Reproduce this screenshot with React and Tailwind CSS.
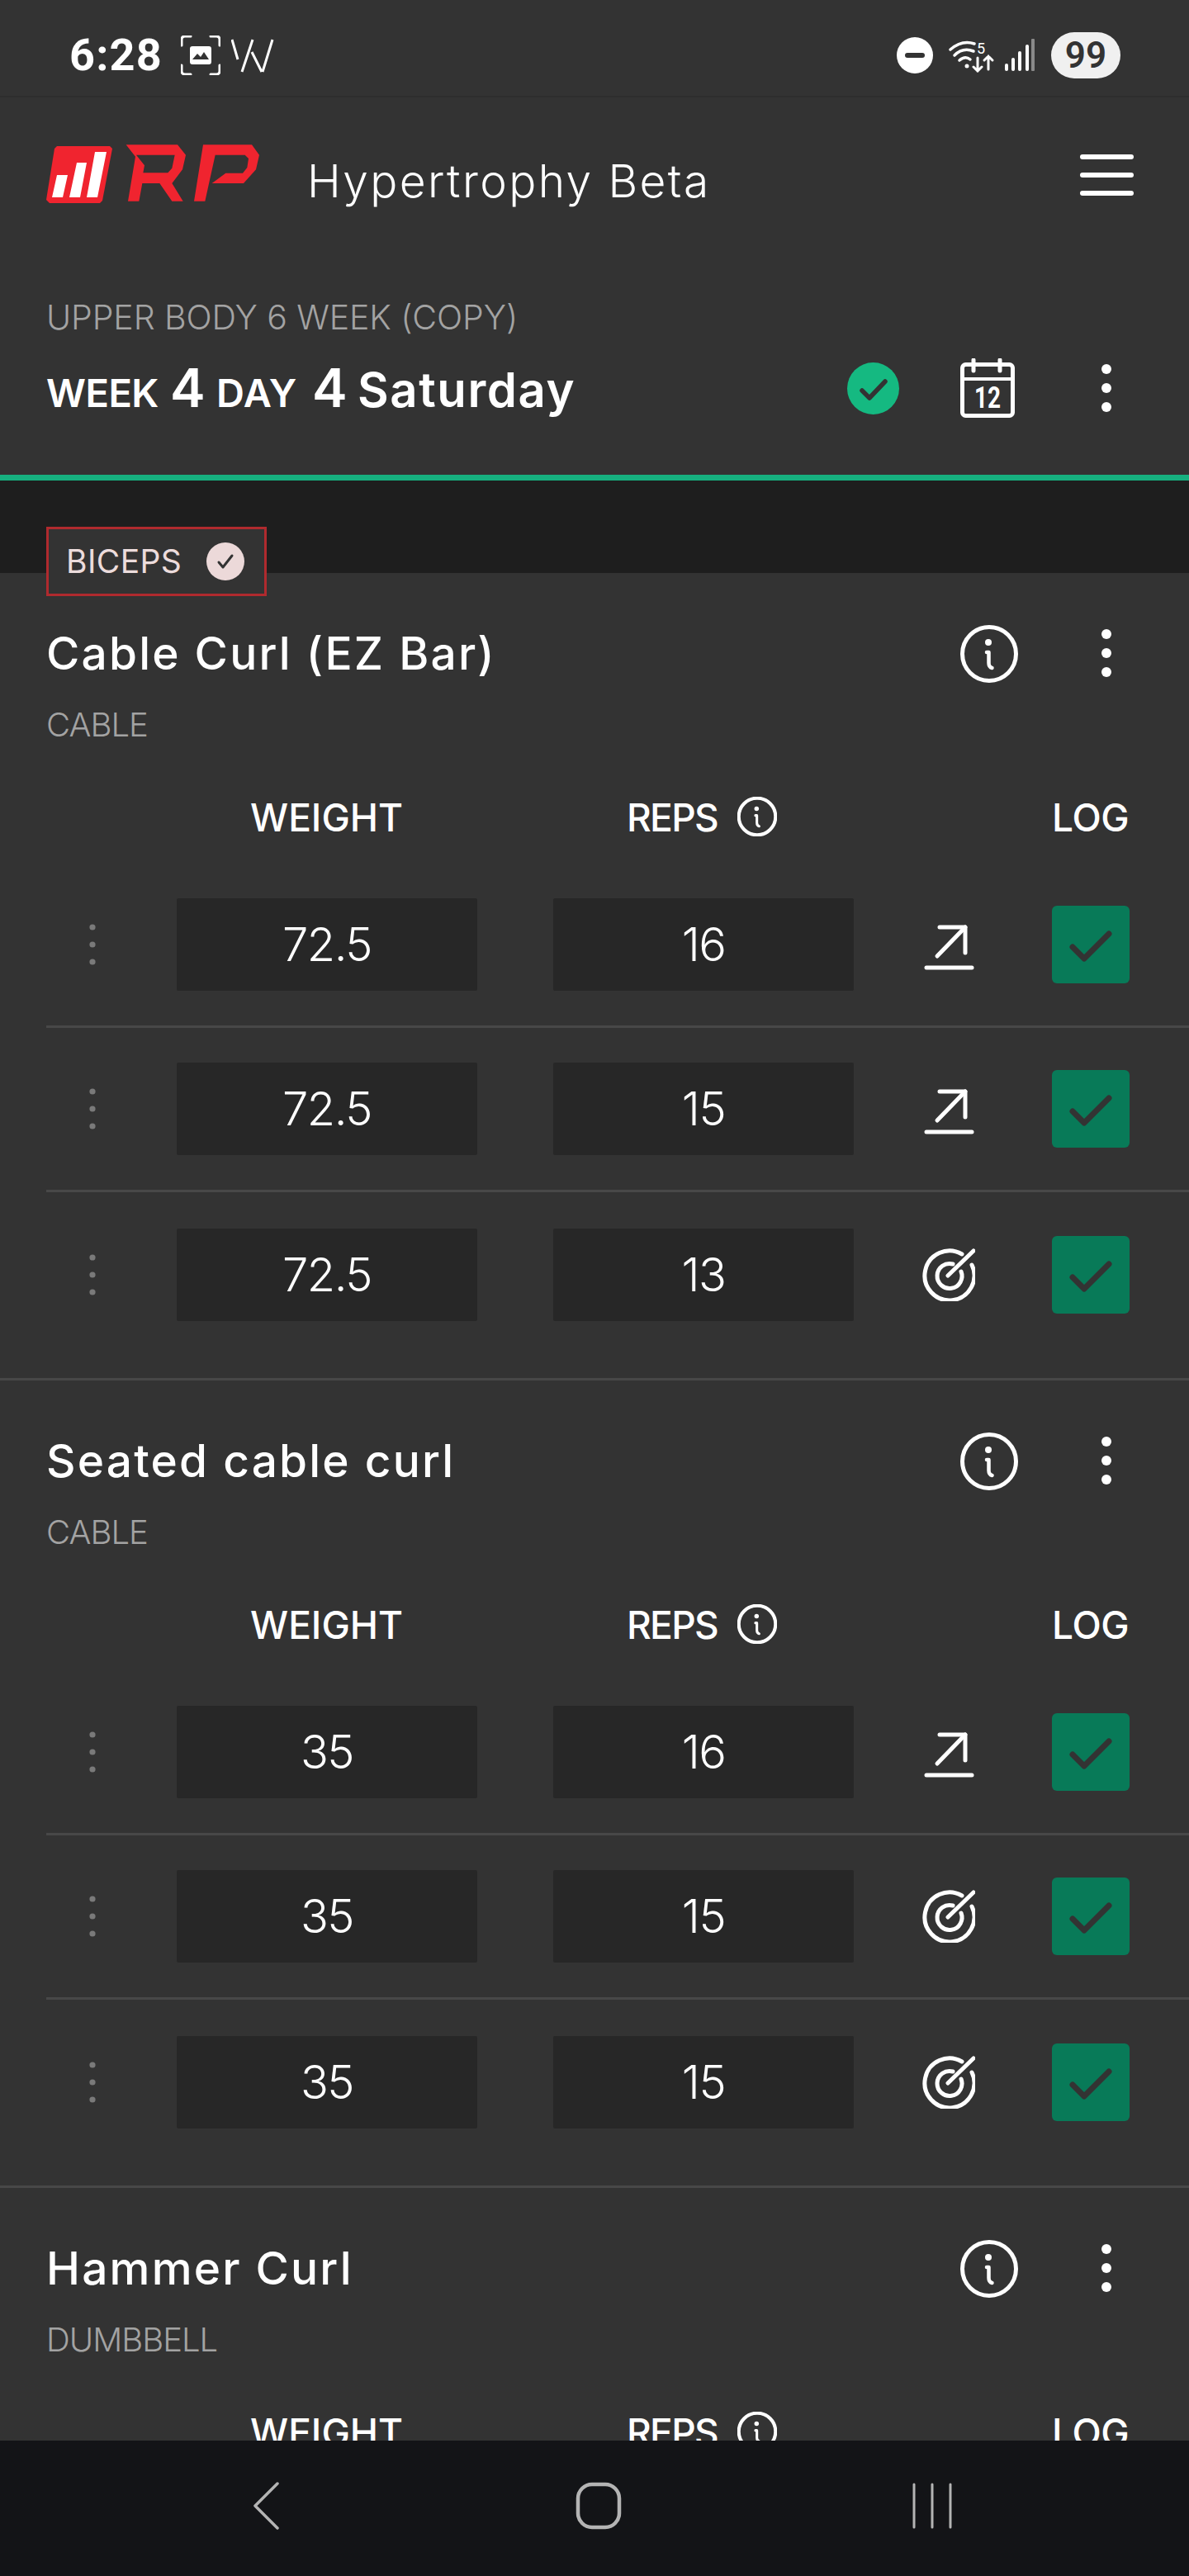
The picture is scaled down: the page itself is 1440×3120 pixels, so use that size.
import React from "react";

function Dots({ className = "" }) {
  return (
    <svg width="14" height="60" viewBox="0 0 14 60" className={className}>
      <circle cx="7" cy="7" r="6" fill="#fff" />
      <circle cx="7" cy="30" r="6" fill="#fff" />
      <circle cx="7" cy="53" r="6" fill="#fff" />
    </svg>
  );
}

function Info({ size = 70, sw = 5 }) {
  return (
    <svg width={size} height={size} viewBox="0 0 70 70" fill="none" stroke="#fff">
      <circle cx="35" cy="35" r="32.5" strokeWidth={sw} />
      <circle cx="34" cy="21" r="4" fill="#fff" stroke="none" />
      <path d="M32 33h2.5V46q0 5 4 6" strokeWidth="4.5" strokeLinecap="round" strokeLinejoin="round" />
    </svg>
  );
}

function Trend() {
  return (
    <svg width="64" height="64" viewBox="0 0 64 64" fill="none" stroke="#fff" strokeWidth="5" strokeLinecap="round" strokeLinejoin="round">
      <path d="M21 11H52V42" />
      <path d="M52 11L18 46" />
      <path d="M5 60H60" />
    </svg>
  );
}

function Target() {
  return (
    <svg width="64" height="64" viewBox="0 0 64 64" fill="none" stroke="#fff" strokeWidth="5" strokeLinecap="round">
      <path d="M60 20A30 30 0 1 1 48 7" />
      <path d="M47 28A15 15 0 1 1 37 19" />
      <path d="M31 33L62 3" />
    </svg>
  );
}

function Row({ weight, reps, icon, last }) {
  return (
    <div className={`ml-14 h-[199px] flex items-center ${last ? "" : "border-b-[3px] border-[#484848]"}`}>
      <div className="w-[158px] pl-[50px] flex">
        <svg width="12" height="52" viewBox="0 0 12 52" fill="#7a7a7a">
          <circle cx="6" cy="5" r="3.6" />
          <circle cx="6" cy="26" r="3.6" />
          <circle cx="6" cy="47" r="3.6" />
        </svg>
      </div>
      <div className="w-[364px] h-[112px] mr-[92px] rounded-[2px] bg-[#272727] flex items-center justify-center text-[56px] font-light text-white tracking-[-1.5px]">{weight}</div>
      <div className="w-[364px] h-[112px] rounded-[2px] bg-[#272727] flex items-center justify-center text-[56px] font-light text-white tracking-[-1.5px]">{reps}</div>
      <div className="ml-[83px] w-[64px] h-[64px]">{icon === "t" ? <Target /> : <Trend />}</div>
      <div className="ml-[93px] w-[94px] h-[94px] rounded-[6px] bg-[#087a58] flex items-center justify-center">
        <svg width="94" height="94" viewBox="0 0 94 94" fill="none" stroke="#333" strokeWidth="7" strokeLinecap="round" strokeLinejoin="round">
          <path d="M25 50L39 64L69 34" />
        </svg>
      </div>
    </div>
  );
}

function Section({ title, sub, rows, badge }) {
  return (
    <section className="relative h-[978px] border-b-[3px] border-[#484848] pt-14 overflow-visible">
      {badge && (
        <div className="absolute left-14 top-[-56px] w-[267px] h-[84px] border-[3px] border-[#b02a2e] bg-[#333333] flex items-center pl-[21px]">
          <span className="text-[39px] tracking-[0.4px] text-[#ecdcdc] font-normal">BICEPS</span>
          <span className="absolute left-[191px] top-[16px] w-[46px] h-[46px] rounded-full bg-[#ecd9d9] flex items-center justify-center">
            <svg width="24" height="24" viewBox="0 0 24 24" fill="none" stroke="#333" strokeWidth="3" strokeLinecap="round" strokeLinejoin="round">
              <path d="M4 13l5 6L20 5" />
            </svg>
          </span>
        </div>
      )}
      <div className="h-[80px] pl-14 flex items-center relative">
        <h2 className="text-[55px] pt-[3px] font-medium text-white tracking-[2.2px] whitespace-nowrap">{title}</h2>
        <div className="absolute left-[1163px] top-[7px]"><Info /></div>
        <div className="absolute left-[1333px] top-[11px]"><Dots /></div>
      </div>
      <div className="mt-[23px] h-[50px] pl-14 flex items-center text-[40px] font-light text-[#a3a3a3] tracking-[-1px]">{sub}</div>
      <div className="mt-[57px] h-[60px] relative text-[46px] text-white font-medium">
        <span className="absolute left-[303px] top-0 leading-[60px] tracking-[0px]">WEIGHT</span>
        <span className="absolute left-[759px] top-0 leading-[60px] tracking-[-1.7px]">REPS</span>
        <span className="absolute left-[893px] top-[5px]"><Info size={48} sw={6} /></span>
        <span className="absolute left-[1274px] top-0 leading-[60px] tracking-[-0.3px]">LOG</span>
      </div>
      <div className="mt-[26px]">
        {rows.map((r, i) => (
          <Row key={i} weight={r[0]} reps={r[1]} icon={r[2]} last={i === rows.length - 1} />
        ))}
      </div>
    </section>
  );
}

export default function App() {
  return (
    <div className="w-[1440px] h-[3120px] bg-[#333333] flex flex-col overflow-hidden font-['Inter',sans-serif]">
      {/* status bar */}
      <div className="h-[118px] shrink-0 border-b-2 border-[#2e2e2e] pt-[18px] flex items-center pl-[84px] pr-[83px] font-['Roboto',sans-serif]">
        <span className="w-[135px] text-[54px] font-bold text-white tracking-[1.2px] leading-none">6:28</span>
        <svg width="48" height="48" viewBox="0 0 48 48" fill="none" stroke="#fff" strokeWidth="3" strokeLinecap="round">
          <path d="M1 12V5q0-4 4-4h7M36 1h7q4 0 4 4v7M1 36v7q0 4 4 4h7M47 36v7q0 4-4 4h-7" />
          <rect x="11" y="13" width="26" height="22" rx="3" fill="#fff" stroke="none" />
          <path d="M14 29l6-7 4 4 4-6 6 9z" fill="#333" stroke="none" />
        </svg>
        <svg width="52" height="42" viewBox="0 0 52 42" className="ml-[13px]" fill="none" stroke="#fff" strokeWidth="3">
          <path d="M1 2L8 26M26 2L13 41M25 17L37 41M50 2L38 41" />
        </svg>
        <div className="flex-1" />
        <span className="w-[44px] h-[44px] rounded-full bg-white flex items-center justify-center">
          <span className="w-[24px] h-[6px] rounded-full bg-[#333333]" />
        </span>
        <svg width="56" height="42" viewBox="0 0 56 42" className="ml-[19px]" fill="none" stroke="#fff" strokeLinecap="round">
          <path d="M2 14Q16 2 31 7" strokeWidth="3.5" />
          <path d="M7 21Q17 11 30 16" strokeWidth="3.5" />
          <path d="M13 27Q20 21 26 26" strokeWidth="3.5" />
          <circle cx="22" cy="34" r="2.5" fill="#fff" stroke="none" />
          <text x="34" y="19" fontSize="18" fill="#fff" stroke="none" fontFamily="Roboto, sans-serif">5</text>
          <path d="M35 24V40M30 35l5 5 5-5" strokeWidth="3" />
          <path d="M48 38V22M43 27l5-5 5 5" strokeWidth="3" />
        </svg>
        <svg width="38" height="42" viewBox="0 0 38 42" className="ml-[11px]" fill="#fff">
          <rect x="1" y="31" width="4" height="9" rx="2" />
          <rect x="9" y="24" width="4" height="16" rx="2" />
          <rect x="17" y="16" width="4" height="24" rx="2" />
          <rect x="26" y="8" width="4" height="32" rx="2" />
          <rect x="33" y="1" width="4" height="39" rx="1" fill="#8a8a8a" />
        </svg>
        <span className="ml-[19px] w-[84px] h-[56px] rounded-[28px] bg-[#f0f0f0] flex items-center justify-center text-[44px] font-semibold text-[#333333] leading-none">99</span>
      </div>

      {/* app header */}
      <div className="h-[188px] shrink-0 flex items-center pl-14 pr-[67px]">
        <svg width="80" height="70" viewBox="56 178 80 70" className="shrink-0">
          <path d="M69 178H133L136 181L124 244L121 247H60L56 243L66 181Z" fill="#f0242f" />
          <path d="M69 213H82L76 240H63ZM93 198H105L97 240H84ZM115 185H129L118 240H105Z" fill="#fff" />
        </svg>
        <svg width="190" height="90" viewBox="0 0 570 270" className="ml-[4px] shrink-0">
          <path fillRule="evenodd" d="M38 25H225L255 62L243 115L205 165L245 230H205L160 165H97L85 230H45L72 68ZM75 62L105 100L100 127H190L205 110L215 62Z" fill="#f0242f" />
          <path d="M318 25H495L522 62L510 115L465 165H350L400 128H462L478 108L483 75L470 62H362L325 230H285Z" fill="#f0242f" />
        </svg>
        <span className="ml-[42px] pt-[14px] text-[55px] font-light text-white tracking-[2.4px] whitespace-nowrap">Hypertrophy Beta</span>
        <div className="flex-1" />
        <div className="w-[65px] flex flex-col gap-[16px]">
          <div className="h-[6px] rounded-full bg-white" />
          <div className="h-[6px] rounded-full bg-white" />
          <div className="h-[6px] rounded-full bg-white" />
        </div>
      </div>

      {/* program */}
      <div className="h-[269px] shrink-0 pt-[49px] px-14 relative">
        <div className="h-[60px] flex items-center text-[41px] font-light text-[#a3a3a3] tracking-[-0.1px] whitespace-nowrap">UPPER BODY 6 WEEK (COPY)</div>
        <div className="mt-[17px] h-[76px] flex items-center">
          <div className="flex items-baseline text-white font-semibold whitespace-nowrap">
            <span className="text-[47px] tracking-[-0.5px] w-[150px]">WEEK</span>
            <span className="text-[64px] w-[56px]">4</span>
            <span className="text-[47px] tracking-[0.6px] w-[116px]">DAY</span>
            <span className="text-[64px] w-[55px]">4</span>
            <span className="text-[58px] tracking-[1.6px]">Saturday</span>
          </div>
          <div className="flex-1" />
          <span className="w-[63px] h-[63px] rounded-full bg-[#15b981] flex items-center justify-center">
            <svg width="63" height="63" viewBox="0 0 63 63" fill="none" stroke="#333" strokeWidth="5.5" strokeLinecap="round" strokeLinejoin="round">
              <path d="M18 34L27 43L46 23" />
            </svg>
          </span>
          <svg width="66" height="72" viewBox="0 0 66 72" className="ml-[74px]">
            <rect x="2.5" y="7.5" width="61" height="62" rx="4" fill="none" stroke="#fff" strokeWidth="5" />
            <path d="M3 25H63" stroke="#fff" strokeWidth="4" />
            <path d="M16 2V15M48 2V15" stroke="#fff" strokeWidth="5" strokeLinecap="round" />
            <text x="33" y="60" textAnchor="middle" fontSize="36" fontWeight="700" fill="#fff" fontFamily="Roboto, sans-serif" textLength="32" lengthAdjust="spacingAndGlyphs">12</text>
          </svg>
          <div className="ml-[104px] mr-[37px] flex"><Dots /></div>
        </div>
      </div>

      <div className="h-[7px] shrink-0 bg-[#16b07f]" />
      <div className="h-[112px] shrink-0 bg-[#1e1e1e]" />

      {/* content */}
      <div className="flex-1 min-h-0 relative">
        <Section
          badge
          title="Cable Curl (EZ Bar)"
          sub="CABLE"
          rows={[["72.5", "16", "a"], ["72.5", "15", "a"], ["72.5", "13", "t"]]}
        />
        <Section
          title="Seated cable curl"
          sub="CABLE"
          rows={[["35", "16", "a"], ["35", "15", "t"], ["35", "15", "t"]]}
        />
        <Section title="Hammer Curl" sub="DUMBBELL" rows={[]} />
      </div>

      {/* android nav */}
      <div className="h-[164px] shrink-0 bg-[#131417] relative z-10 flex items-center pl-[306px] pb-[6px]">
        <svg width="34" height="58" viewBox="0 0 34 58" fill="none" stroke="#b4b4b4" strokeWidth="3.5" strokeLinecap="round" strokeLinejoin="round">
          <path d="M30 2L3 29L30 56" />
        </svg>
        <svg width="56" height="58" viewBox="0 0 56 58" className="ml-[357px]" fill="none" stroke="#b4b4b4" strokeWidth="4.5">
          <rect x="3" y="3" width="50" height="52" rx="17" />
        </svg>
        <svg width="48" height="58" viewBox="0 0 48 58" className="ml-[352px]" fill="none" stroke="#b4b4b4" strokeWidth="3" strokeLinecap="round">
          <path d="M2 3V55M24 3V55M46 3V55" />
        </svg>
      </div>
    </div>
  );
}
